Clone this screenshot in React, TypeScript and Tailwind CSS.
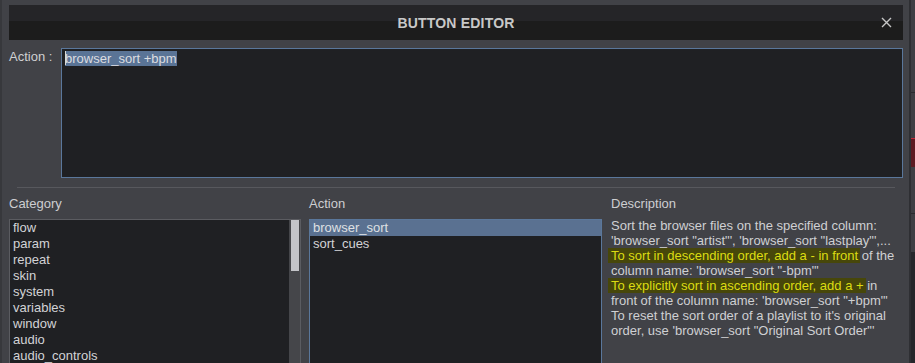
const categories = [
  'flow',
  'param',
  'repeat',
  'skin',
  'system',
  'variables',
  'window',
  'audio',
  'audio_controls',
];

const actions = ['browser_sort', 'sort_cues'];

function Mark({ children }: { children: React.ReactNode }) {
  return (
    <span className="-ml-[3px] -mr-[2px] bg-[#47470a] pl-[3px] pr-[2px] text-[#dcdc12]">
      {children}
    </span>
  );
}

export default function App() {
  return (
    <div className="flex h-[363px] w-[915px] overflow-hidden bg-[#414247] font-['Liberation_Sans',Arial,sans-serif] text-[13px] leading-4 text-[#cdced1]">
      {/* app behind, left edge */}
      <div className="w-[2px] shrink-0 bg-[#37383c]" />

      {/* dialog */}
      <div className="flex w-[907px] shrink-0 flex-col overflow-hidden bg-[#414247]">
        <div className="ml-[7px] mr-[6px] mt-[5px] grid h-[35px] shrink-0 grid-cols-[1fr_auto_1fr] items-center bg-[linear-gradient(to_bottom,#252528_47%,#1c1c1c_47%)]">
          <span />
          <span className="pt-px text-[14px] font-bold tracking-[0.2px] text-[#c8c8c8]">BUTTON EDITOR</span>
          <div className="flex justify-end pr-[11px]">
            <svg width="11" height="11" viewBox="0 0 11 11" aria-label="Close">
              <path d="M1 1 L10 10 M10 1 L1 10" stroke="#c6c6c6" strokeWidth="1.4" fill="none" />
            </svg>
          </div>
        </div>

        <div className="ml-[7px] mr-[6px] mt-[8px] flex shrink-0">
          <div className="w-[52px] shrink-0 pt-px text-[#cfd0d2]">Action :</div>
          <div className="h-[130px] flex-1 border border-[#5a779b] bg-[#1f2023] pl-[3px]">
            <span className="inline-block h-[14px] w-px translate-y-[2px] bg-[#d8d8d8]" />
            <span className="-ml-px bg-[#5a7496] text-[#dcdde0]">browser_sort +bpm</span>
          </div>
        </div>

        <div className="ml-[15px] mr-[14px] mt-[9px] h-px shrink-0 bg-[#57585d]" />

        <div className="ml-[7px] mt-[8px] flex shrink-0">
          <div className="flex w-[292px] shrink-0 flex-col">
            <div className="mb-[7px] h-4">Category</div>
            <div className="flex h-[150px] border border-[#5b5c61] bg-[#1f2023]">
              <ul className="flex-1 pl-[3px] text-[#d2d3d6]">
                {categories.map((c) => (
                  <li key={c} className="h-4">
                    {c}
                  </li>
                ))}
              </ul>
              <div className="w-[11px] bg-[#45464a] pl-[2px]">
                <div className="h-[51px] w-[8px] bg-[#c3c4c8]" />
              </div>
            </div>
          </div>

          <div className="ml-[8px] flex w-[293px] shrink-0 flex-col">
            <div className="mb-[7px] h-4">Action</div>
            <ul className="h-[150px] border border-[#5a779b] bg-[#1f2023] text-[#d2d3d6]">
              {actions.map((a, i) => (
                <li key={a} className={i === 0 ? 'h-4 bg-[#5a7191] pl-[3px] text-[#dfe0e3]' : 'h-4 pl-[3px]'}>
                  {a}
                </li>
              ))}
            </ul>
          </div>

          <div className="ml-[9px] flex flex-1 flex-col whitespace-nowrap">
            <div className="mb-[6px] h-4">Description</div>
            <div className="leading-[15px] text-[#cfd0d3]">
              <div>Sort the browser files on the specified column:</div>
              <div>'browser_sort "artist"', 'browser_sort "lastplay"',...</div>
              <div>
                <Mark>To sort in descending order, add a - in front</Mark> of the
              </div>
              <div>column name: 'browser_sort "-bpm"'</div>
              <div>
                <Mark>To explicitly sort in ascending order, add a +</Mark> in
              </div>
              <div>front of the column name: 'browser_sort "+bpm"'</div>
              <div>To reset the sort order of a playlist to it's original</div>
              <div>order, use 'browser_sort "Original Sort Order"'</div>
            </div>
          </div>
        </div>
      </div>

      {/* app behind, right edge */}
      <div className="flex w-[6px] shrink-0 flex-col border-l-2 border-[#2e2f33] bg-[#3e3f44]">
        <div className="h-[93px] shrink-0 border-b border-[#2a2b2f]" />
        <div className="h-[45px] shrink-0" />
        <div className="h-[29px] shrink-0 border-t border-[#c02838] bg-[#5e1a22]" />
        <div className="h-[47px] shrink-0 border-b border-[#2a2b2f]" />
        <div className="h-[38px] shrink-0" />
        <div className="flex-1 bg-[#26272b]" />
      </div>
    </div>
  );
}
